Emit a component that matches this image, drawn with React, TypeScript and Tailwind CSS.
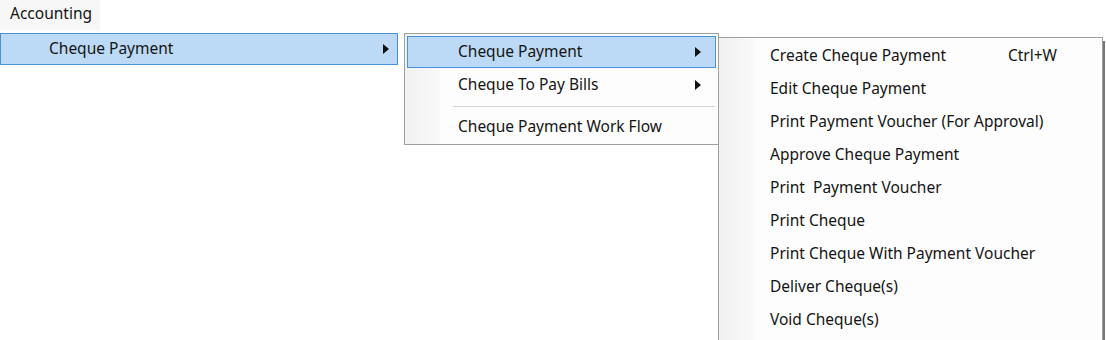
import { ReactNode } from 'react'

const font = { fontFamily: '"Noto Sans", "Open Sans", sans-serif' }

function Arrow() {
  return (
    <svg width="6" height="10" viewBox="0 0 6 10" className="shrink-0">
      <path d="M0 0 L6 5 L0 10 Z" fill="#111" />
    </svg>
  )
}

function Item({
  label,
  hot,
  submenu,
  shortcut,
  h = 'h-[33px]',
}: {
  label: string
  hot?: boolean
  submenu?: boolean
  shortcut?: string
  h?: string
}) {
  return (
    <div
      className={`flex ${h} items-center pl-[50px] pr-[14px] ${
        hot ? 'border border-[#4b91da] bg-[#bcdaf5]' : 'border border-transparent'
      }`}
    >
      <span className="flex-1 whitespace-pre">{label}</span>
      {shortcut && <span className="mr-[30px]">{shortcut}</span>}
      {submenu && <Arrow />}
    </div>
  )
}

function Menu({ children, className }: { children: ReactNode; className: string }) {
  return (
    <div className={`relative border border-[#a0a0a0] bg-[#fdfdfd] ${className}`}>
      <div className="absolute bottom-0 left-0 top-0 w-[35px] bg-gradient-to-r from-[#f1f1f1] to-[#f9f9f9]" />
      <div className="relative">{children}</div>
    </div>
  )
}

export default function App() {
  return (
    <div className="h-[340px] w-[1106px] overflow-hidden bg-white text-[15.5px] text-[#141414]" style={font}>
      <div className="flex h-[30px] w-[100px] items-start bg-[#f7f7f7] pl-[10px] pt-[2px]">Accounting</div>

      <div className="mt-[3px] flex items-start">
        <div className="w-[398px]">
          <div className="flex h-[32px] items-center border border-[#4b91da] bg-[#bcdaf5] pl-[48px] pr-[8px]">
            <span className="flex-1">Cheque Payment</span>
            <Arrow />
          </div>
        </div>

        <Menu className="ml-[6px] w-[315px] p-[2px]">
          <Item label="Cheque Payment" hot submenu h="h-[32px]" />
          <Item label="Cheque To Pay Bills" submenu h="h-[34px]" />
          <div className="ml-[46px] mr-[1px] my-[4px] h-px bg-[#d4d4d4]" />
          <Item label="Cheque Payment Work Flow" h="h-[31px]" />
        </Menu>

        <Menu className="-ml-px mt-[4px] h-[320px] w-[385px] pt-[1px] shadow-[3px_3px_0_-1px_#777]">
          <Item label="Create Cheque Payment" shortcut="Ctrl+W" />
          <Item label="Edit Cheque Payment" />
          <Item label="Print Payment Voucher (For Approval)" />
          <Item label="Approve Cheque Payment" />
          <Item label="Print  Payment Voucher" />
          <Item label="Print Cheque" />
          <Item label="Print Cheque With Payment Voucher" />
          <Item label="Deliver Cheque(s)" />
          <Item label="Void Cheque(s)" />
        </Menu>
      </div>
    </div>
  )
}
